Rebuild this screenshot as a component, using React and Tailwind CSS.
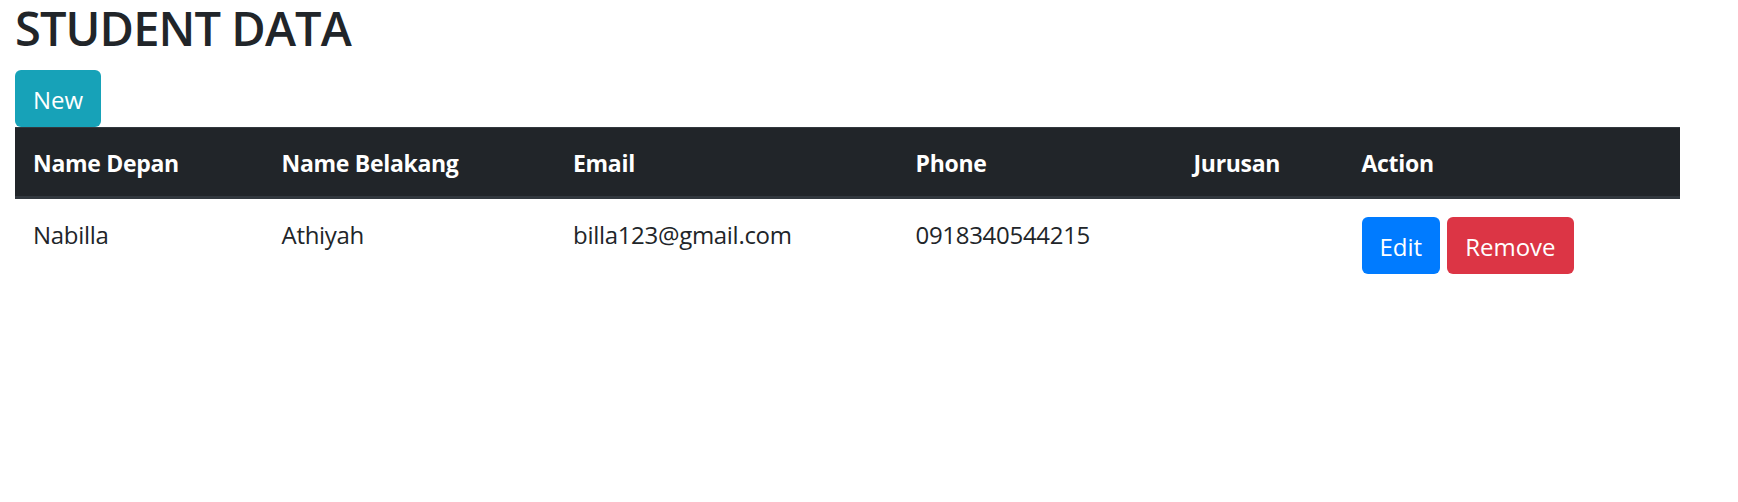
const students = [
  { first: 'Nabilla', last: 'Athiyah', email: 'billa123@gmail.com', phone: '0918340544215', major: '' },
]

const cols = 'grid grid-cols-[248.5px_291.5px_342.5px_278px_168px_336px]'

export default function App() {
  return (
    <div className="min-h-screen bg-white pl-[15px] text-[#212529] font-['Open_Sans',sans-serif]">
      <h2 className="text-[47px] leading-[57.6px] font-semibold mb-[12px] tracking-[-0.9px]">STUDENT DATA</h2>

      <button className="h-[57px] px-[18px] pt-[3px] rounded-[6px] bg-[#17a2b8] text-white text-[24px] leading-[36px]">
        New
      </button>

      {/* ── Table ── */}
      <div className="w-[1665px]">
        <div className={`${cols} bg-[#212529] text-white font-bold text-[23px] tracking-[-0.3px] border-t border-[#32383e] border-b-[3px] border-b-[#32383e]`}>
          {['Name Depan', 'Name Belakang', 'Email', 'Phone', 'Jurusan', 'Action'].map((h) => (
            <div key={h} className="h-[68px] px-[18px] pt-[4px] flex items-center">{h}</div>
          ))}
        </div>

        {students.map((s) => (
          <div key={s.email} className={`${cols} text-[24px] leading-[36px]`}>
            <div className="p-[18px] tracking-[-0.3px]">{s.first}</div>
            <div className="p-[18px] tracking-[-0.3px]">{s.last}</div>
            <div className="p-[18px] tracking-[-0.3px]">{s.email}</div>
            <div className="p-[18px] tracking-[-0.3px]">{s.phone}</div>
            <div className="p-[18px]">{s.major}</div>
            <div className="p-[18px] flex gap-[7px]">
              <button className="h-[57px] px-[18px] pt-[3px] rounded-[6px] bg-[#007bff] text-white">Edit</button>
              <button className="h-[57px] px-[18px] pt-[3px] rounded-[6px] bg-[#dc3545] text-white">Remove</button>
            </div>
          </div>
        ))}
      </div>
    </div>
  )
}
